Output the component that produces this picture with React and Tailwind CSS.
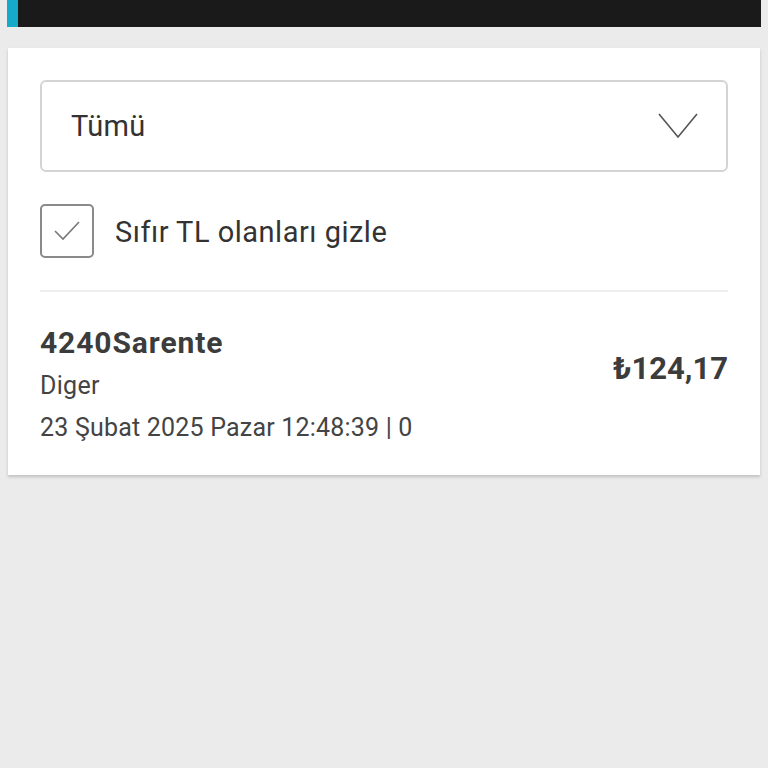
export default function App() {
  return (
    <div className="min-h-[768px] w-[768px] bg-[#ebebeb] font-['Roboto','Noto_Sans',sans-serif]">
      {/* top bar */}
      <div className="mx-[7px] flex h-[27px]">
        <div className="w-[11px] bg-[#17a9c9]" />
        <div className="flex-1 bg-[#1a1a1a]" />
      </div>

      <div className="mx-[8px] mt-[21px] bg-white shadow-[0_2px_3px_rgba(0,0,0,0.18)]">
        <div className="px-[32px] pt-[32px]">
          <div className="flex h-[92px] items-center justify-between rounded-[6px] border-2 border-[#d4d4d4] pl-[29px] pr-[28px]">
            <span className="mt-[2px] text-[29px] tracking-[0.3px] text-[#333]">Tümü</span>
            <svg width="40" height="26" viewBox="0 0 40 26" fill="none" stroke="#555" strokeWidth="1.6">
              <path d="M1 1 L20 24 L39 1" />
            </svg>
          </div>

          <div className="mt-[32px] flex items-center gap-[21px] pb-[32px]">
            <div className="flex h-[54px] w-[54px] items-center justify-center rounded-[5px] border-2 border-[#8a8a8a]">
              <svg width="26" height="20" viewBox="0 0 26 20" fill="none" stroke="#777" strokeWidth="1.6">
                <path d="M1 10 L9 18 L25 1" />
              </svg>
            </div>
            <span className="mt-[3px] text-[29px] tracking-[0.5px] text-[#333]">Sıfır TL olanları gizle</span>
          </div>
        </div>

        <div className="mx-[32px] h-[2px] bg-[#eeeeee]" />

        <div className="flex items-center justify-between px-[32px] pb-[30px] pt-[32px]">
          <div className="flex flex-col">
            <span className="text-[30px] font-bold leading-[38px] tracking-[0.9px] text-[#3c3c3c]">4240Sarente</span>
            <span className="mt-[7px] text-[25px] leading-[34px] tracking-[0.3px] text-[#444]">Diger</span>
            <span className="mt-[8px] text-[25px] leading-[34px] tracking-[0.2px] text-[#444]">23 Şubat 2025 Pazar 12:48:39 | 0</span>
          </div>
          <span className="mb-[30px] text-[31px] font-bold text-[#3c3c3c]">₺124,17</span>
        </div>
      </div>
    </div>
  );
}
